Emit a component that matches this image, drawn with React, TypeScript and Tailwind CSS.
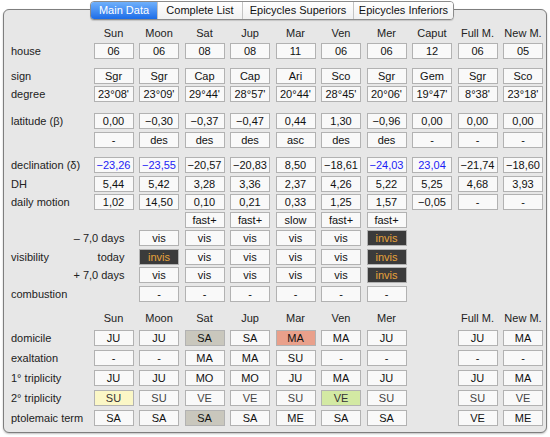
const font = "font-['Liberation_Sans',Arial,sans-serif]"

const tabs = [
  { name: 'Main Data', w: 'w-[66px]', on: true },
  { name: 'Complete List', w: 'w-[85px]', on: false },
  { name: 'Epicycles Superiors', w: 'w-[111px]', on: false },
  { name: 'Epicycles Inferiors', w: 'w-[100px]', on: false },
]

const planets = ['Sun', 'Moon', 'Sat', 'Jup', 'Mar', 'Ven', 'Mer', 'Caput', 'Full M.', 'New M.']
const dignityHeads = ['Sun', 'Moon', 'Sat', 'Jup', 'Mar', 'Ven', 'Mer', '', 'Full M.', 'New M.']

// prefix codes: b: blue text, i: invis, g: grey fill, r: salmon, y: yellow, v: green, l: light text, '' = empty slot
const variants: Record<string, string> = {
  n: 'bg-[#f9f9f9] text-[#111]',
  b: 'bg-[#f9f9f9] text-[#1c1cf5]',
  i: 'bg-[#3b3b3b] text-[#e8a33a] border-[#9a9a9a]',
  g: 'bg-[#c9c7bd] text-[#111]',
  r: 'bg-[#e9a08b] text-[#111]',
  y: 'bg-[#fbf7c6] text-[#333]',
  v: 'bg-[#d3e9a3] text-[#333]',
  l: 'bg-[#f9f9f9] text-[#444]',
}

const Cell = ({ v }: { v: string }) => {
  if (v === '') return <div />
  let kind = 'n'
  let text = v
  if (v[1] === ':') {
    kind = v[0]
    text = v.slice(2)
  }
  return (
    <div
      className={`h-4 border border-[#b2b2b2] text-center text-[11px] leading-[14px] ${variants[kind]}`}
    >
      {text}
    </div>
  )
}

const Row = ({
  label,
  cells,
  mt,
  sub,
}: {
  label: string
  cells: string[]
  mt: string
  sub?: string
}) => (
  <div className={`grid grid-cols-[77px_repeat(10,40px)] gap-x-[5.5px] ${mt}`}>
    {sub !== undefined ? (
      <div className="col-span-2 flex items-center justify-between pr-[9px] text-[11px] text-[#222]">
        <span>{label}</span>
        <span>{sub}</span>
      </div>
    ) : (
      <div className="flex items-center text-[11px] leading-[14px] text-[#222]">{label}</div>
    )}
    {cells.map((c, i) => (
      <Cell key={i} v={c} />
    ))}
  </div>
)

const Heads = ({ names, mt }: { names: string[]; mt: string }) => (
  <div className={`grid grid-cols-[77px_repeat(10,40px)] gap-x-[5.5px] ${mt}`}>
    <div />
    {names.map((n, i) => (
      <div key={i} className="text-center text-[11px] leading-[14px] text-[#222]">
        {n}
      </div>
    ))}
  </div>
)

const dash = '-'

export default function App() {
  return (
    <div className={`w-[550px] h-[437px] bg-white ${font}`}>
      <div className="relative z-10 flex justify-center pt-px pr-[6px]">
        <div className="flex h-[19px] overflow-hidden rounded-[4px] border border-[#8c8c8c] bg-white shadow-[0_1px_1px_rgba(0,0,0,0.15)]">
          {tabs.map((t, i) => (
            <div
              key={t.name}
              className={`${t.w} flex items-center justify-center text-[11px] ${
                t.on
                  ? 'bg-gradient-to-b from-[#6fb0fb] to-[#1a6ce8] text-white'
                  : 'bg-gradient-to-b from-white to-[#f1f1f1] text-[#111]'
              } ${i > 0 ? 'border-l border-[#c4c4c4]' : ''}`}
            >
              {t.name}
            </div>
          ))}
        </div>
      </div>
      <div className="mx-[3px] -mt-[11px] h-[424px] rounded-[6px] border border-[#7e7e7e] bg-[#e7e7e7] pl-[7px] pt-px shadow-[0_1px_2px_rgba(0,0,0,0.25)]">
        <Heads names={planets} mt="mt-[15px]" />
        <Row label="house" mt="mt-[3px]" cells={['06', '06', '08', '08', '11', '06', '06', '12', '06', '05']} />
        <Row label="sign" mt="mt-[9px]" cells={['Sgr', 'Sgr', 'Cap', 'Cap', 'Ari', 'Sco', 'Sgr', 'Gem', 'Sgr', 'Sco']} />
        <Row
          label="degree"
          mt="mt-[2px]"
          cells={["23°08'", "23°09'", "29°44'", "28°57'", "20°44'", "28°45'", "20°06'", "19°47'", "8°38'", "23°18'"]}
        />
        <Row
          label="latitude (β)"
          mt="mt-[11px]"
          cells={['0,00', '−0,30', '−0,37', '−0,47', '0,44', '1,30', '−0,96', '0,00', '0,00', '0,00']}
        />
        <Row label="" mt="mt-[3px]" cells={[dash, 'des', 'des', 'des', 'asc', 'des', 'des', dash, dash, dash]} />
        <Row
          label="declination (δ)"
          mt="mt-[9px]"
          cells={['b:−23,26', 'b:−23,55', '−20,57', '−20,83', '8,50', '−18,61', 'b:−24,03', 'b:23,04', '−21,74', '−18,60']}
        />
        <Row label="DH" mt="mt-[3px]" cells={['5,44', '5,42', '3,28', '3,36', '2,37', '4,26', '5,22', '5,25', '4,68', '3,93']} />
        <Row
          label="daily motion"
          mt="mt-[2px]"
          cells={['1,02', '14,50', '0,10', '0,21', '0,33', '1,25', '1,57', '−0,05', dash, dash]}
        />
        <Row label="" mt="mt-[2px]" cells={['', '', 'fast+', 'fast+', 'slow', 'fast+', 'fast+']} />
        <Row label="" sub="– 7,0 days" mt="mt-[2px]" cells={['vis', 'vis', 'vis', 'vis', 'vis', 'i:invis']} />
        <Row label="visibility" sub="today" mt="mt-[2px]" cells={['i:invis', 'vis', 'vis', 'vis', 'vis', 'i:invis']} />
        <Row label="" sub="+ 7,0 days" mt="mt-[2px]" cells={['vis', 'vis', 'vis', 'vis', 'vis', 'i:invis']} />
        <Row label="combustion" mt="mt-[2px]" cells={['', dash, dash, dash, dash, dash, dash]} />
        <Heads names={dignityHeads} mt="mt-[9px]" />
        <Row label="domicile" mt="mt-[5px]" cells={['JU', 'JU', 'g:SA', 'SA', 'r:MA', 'MA', 'JU', '', 'JU', 'MA']} />
        <Row label="exaltation" mt="mt-[4px]" cells={[dash, dash, 'MA', 'MA', 'SU', dash, dash, '', dash, dash]} />
        <Row label="1° triplicity" mt="mt-[4px]" cells={['JU', 'JU', 'MO', 'MO', 'JU', 'MA', 'JU', '', 'JU', 'MA']} />
        <Row
          label="2° triplicity"
          mt="mt-[4px]"
          cells={['y:SU', 'l:SU', 'l:VE', 'l:VE', 'l:SU', 'v:VE', 'l:SU', '', 'l:SU', 'l:VE']}
        />
        <Row label="ptolemaic term" mt="mt-[4px]" cells={['SA', 'SA', 'g:SA', 'SA', 'ME', 'SA', 'SA', '', 'VE', 'ME']} />
      </div>
    </div>
  )
}
